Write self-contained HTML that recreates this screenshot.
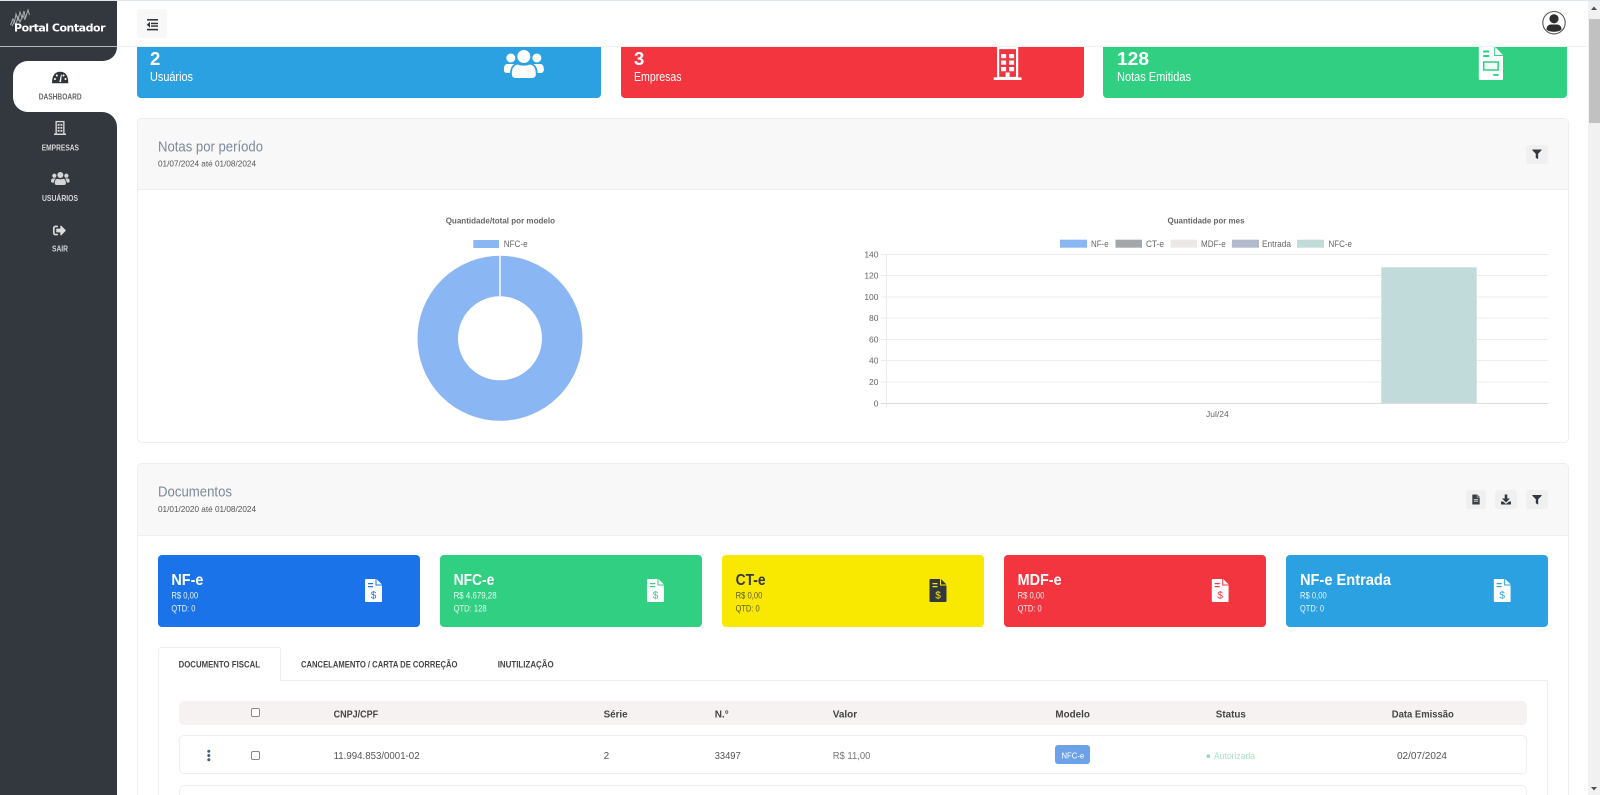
<!DOCTYPE html>
<html lang="pt-BR">
<head>
<meta charset="utf-8">
<title>Portal Contador</title>
<style>
html,body{margin:0;padding:0;width:1600px;height:795px;overflow:hidden;background:#fff;font-family:"Liberation Sans",Arial,sans-serif}
#page{position:relative;width:1600px;height:795px;overflow:hidden;background:#fff}
.b{position:absolute;box-sizing:border-box}
svg.o{position:absolute;left:0;top:0}
text{font-family:"Liberation Sans",Arial,sans-serif}
</style>
</head>
<body>
<div id="page">
<div class="b" style="left:137px;top:47px;width:464px;height:51px;background:#2ca1e2;border-radius:0 0 4px 4px"></div>
<div class="b" style="left:620.5px;top:47px;width:463.5px;height:51px;background:#f3353f;border-radius:0 0 4px 4px"></div>
<div class="b" style="left:1103px;top:47px;width:464px;height:51px;background:#30cf82;border-radius:0 0 4px 4px"></div>

<div class="b" style="left:137px;top:118px;width:1432px;height:325px;border:1px solid #eee;border-radius:5px;background:#fff"></div>
<div class="b" style="left:138px;top:119px;width:1430px;height:71px;background:#f8f8f8;border-bottom:1px solid #eee;border-radius:4px 4px 0 0"></div>
<div class="b" style="left:137px;top:463px;width:1432px;height:340px;border:1px solid #eee;border-radius:5px;background:#fff"></div>
<div class="b" style="left:138px;top:464px;width:1430px;height:72px;background:#f8f8f8;border-bottom:1px solid #eee;border-radius:4px 4px 0 0"></div>

<div class="b" style="left:1526px;top:145px;width:22px;height:19px;background:#f0f0f0;border-radius:3px"></div>
<div class="b" style="left:1466px;top:490px;width:20px;height:19px;background:#f0f0f0;border-radius:3px"></div>
<div class="b" style="left:1495px;top:490px;width:22px;height:19px;background:#f0f0f0;border-radius:3px"></div>
<div class="b" style="left:1526px;top:490px;width:22px;height:19px;background:#f0f0f0;border-radius:3px"></div>

<div class="b" style="left:157.5px;top:555px;width:262px;height:72px;background:#1a73e8;border-radius:4px"></div>
<div class="b" style="left:439.7px;top:555px;width:262px;height:72px;background:#30cf82;border-radius:4px"></div>
<div class="b" style="left:722px;top:555px;width:262px;height:72px;background:#f9e900;border-radius:4px"></div>
<div class="b" style="left:1004.2px;top:555px;width:262px;height:72px;background:#f3353f;border-radius:4px"></div>
<div class="b" style="left:1286.2px;top:555px;width:262px;height:72px;background:#2ca1e2;border-radius:4px"></div>

<div class="b" style="left:158px;top:680px;width:1390px;height:130px;border:1px solid #eee;background:#fff"></div>
<div class="b" style="left:158px;top:647px;width:123px;height:34px;border:1px solid #eee;border-bottom:0;background:#fff;border-radius:3px 3px 0 0"></div>
<div class="b" style="left:178.5px;top:701px;width:1348.5px;height:24px;background:#f6f2f1;border-radius:5px"></div>
<div class="b" style="left:178.5px;top:735px;width:1348.5px;height:39px;border:1px solid #eee;border-radius:5px;background:#fff"></div>
<div class="b" style="left:178.5px;top:785px;width:1348.5px;height:30px;border:1px solid #eee;border-radius:5px;background:#fff"></div>
<div class="b" style="left:251px;top:708px;width:9px;height:9px;border:1px solid #8a8a8a;border-radius:2px;background:#fff"></div>
<div class="b" style="left:251px;top:751px;width:9px;height:9px;border:1px solid #8a8a8a;border-radius:2px;background:#fff"></div>
<div class="b" style="left:1054.5px;top:745px;width:35.5px;height:19px;background:#6ea2e8;border-radius:3px"></div>

<div class="b" style="left:117px;top:0;width:1472px;height:47px;background:#fff;border-bottom:1px solid #f1f1f1"></div>
<div class="b" style="left:0;top:0;width:1600px;height:1px;background:#dfe7ec"></div>
<div class="b" style="left:137px;top:9px;width:30px;height:29px;background:#f8f8f8;border-radius:3px"></div>

<div class="b" style="left:0;top:1px;width:117px;height:794px;background:#33383e"></div>
<div class="b" style="left:0;top:46px;width:117px;height:1px;background:#b4b6b8"></div>
<div class="b" style="left:100px;top:47px;width:17px;height:80px;background:#fff"></div>
<div class="b" style="left:0;top:47px;width:117px;height:14px;background:#33383e;border-radius:0 0 15px 0"></div>
<div class="b" style="left:13px;top:61px;width:104px;height:51px;background:#fff;border-radius:15px 0 0 15px"></div>
<div class="b" style="left:0;top:112px;width:117px;height:683px;background:#33383e;border-radius:0 15px 0 0"></div>

<div class="b" style="left:1588px;top:1px;width:12px;height:794px;background:#f1f1f1"></div>
<div class="b" style="left:1589px;top:19px;width:11px;height:104px;background:#c1c1c1"></div>

<svg class="o" width="1600" height="795" viewBox="0 0 1600 795" xmlns="http://www.w3.org/2000/svg">
<defs>
<symbol id="bld" viewBox="0 0 28 33">
<path d="M4.500 1H23.500V31H4.500Z" fill="none" stroke="currentColor" stroke-width="2.200"/>
<rect x="0" y="30.400" width="28" height="2.600" fill="currentColor"/>
<path d="M7.500 7h5v4.200h-5zM15.500 7h5v4.200h-5zM7.500 13.500h5v4.200h-5zM15.500 13.500h5v4.200h-5zM7.500 20h5v4.200h-5zM15.500 20h5v4.200h-5zM12 25.500h4V31h-4z" fill="currentColor"/>
</symbol>
<symbol id="bls" viewBox="0 0 28 33">
<path d="M5 1.500H23V31H5Z" fill="none" stroke="currentColor" stroke-width="3.200"/>
<rect x="0" y="29.500" width="28" height="3.500" fill="currentColor"/>
<path d="M8.500 7h4.500v4.500H8.500zM15 7h4.500v4.500H15zM8.500 14h4.500v4.500H8.500zM15 14h4.500v4.500H15zM8.500 21h4.500v4.500H8.500zM15 21h4.500v4.500H15z" fill="currentColor"/>
</symbol>
<symbol id="usr" viewBox="0 0 40 28">
<circle cx="20" cy="6.500" r="6.500" fill="currentColor"/>
<circle cx="7" cy="8" r="4.500" fill="currentColor"/>
<circle cx="33" cy="8" r="4.500" fill="currentColor"/>
<path d="M8 24C8 17 11 15 14 14.500C16 16 24 16 26 14.500C29 15 32 17 32 24Q32 28 28 28H12Q8 28 8 24Z" fill="currentColor"/>
<path d="M0 19.500C0 15 2 14 4 14H10.500C8 15.500 6.500 18 6.200 23H3Q0 23 0 19.500ZM40 19.500C40 15 38 14 36 14H29.500C32 15.500 33.500 18 33.800 23H37Q40 23 40 19.500Z" fill="currentColor"/>
</symbol>
<symbol id="fil" viewBox="0 0 512 512">
<path d="M487.976 0H24.028C2.71 0-8.047 25.866 7.058 40.971L192 225.941V432c0 7.831 3.821 15.17 10.237 19.662l80 55.98C298.02 518.69 320 507.493 320 487.98V225.941l184.947-184.97C520.021 25.896 509.338 0 487.976 0z" fill="currentColor"/>
</symbol>
<symbol id="doc" viewBox="0 0 17 23">
<path d="M0 1Q0 0 1 0H10.500V6.500H17V22Q17 23 16 23H1Q0 23 0 22ZM11.500 0L17 5.500H11.500Z" fill="currentColor"/>
</symbol>
</defs>

<!-- logo -->
<g stroke="#a9adb0" stroke-width="1" fill="none">
<path d="M10.500 25L13 19L14.500 22L16 14L18 20L20 12L22 18L24 11L25.500 18L28 10L29.500 15"/>
<path d="M12 26L14 22L16 24L18 17L20 22L23 15L25 20"/>
</g>
<text x="14" y="31.700" font-size="11" font-weight="700" fill="#fff" textLength="91.500" lengthAdjust="spacing" style="font-family:'DejaVu Sans',sans-serif">Portal Contador</text>

<!-- sidebar icons -->
<path d="M52 83.300Q52 71.700 60.200 71.700Q68.300 71.700 68.300 83.300Z" fill="#2f343a"/>
<g fill="#fff"><circle cx="55" cy="79" r="1"/><circle cx="56.800" cy="75.500" r="1"/><circle cx="65.500" cy="79" r="1"/><circle cx="63.500" cy="75.500" r="1"/><path d="M59.300 82L61 74.500L61.800 74.700L61 82Z"/></g>
<use href="#bls" x="54" y="120.700" width="12" height="14.500" color="#d6d7d8"/>
<use href="#usr" x="51" y="172" width="18.700" height="13" color="#d4d5d6"/>
<svg x="52" y="224" width="15" height="13" viewBox="0 0 512 512"><path d="M497 273L329 441c-15 15-41 4.500-41-17v-96H152c-13.300 0-24-10.700-24-24v-96c0-13.300 10.700-24 24-24h136V88c0-21.400 25.900-32 41-17l168 168c9.300 9.400 9.300 24.600 0 34zM192 436v-40c0-6.600-5.400-12-12-12H96c-17.700 0-32-14.300-32-32V160c0-17.700 14.300-32 32-32h84c6.600 0 12-5.400 12-12V76c0-6.600-5.400-12-12-12H96c-53 0-96 43-96 96v192c0 53 43 96 96 96h84c6.600 0 12-5.400 12-12z" fill="#dcdcdd"/></svg>
<g font-size="8.500" font-weight="700">
<text x="38.700" y="99.300" fill="#666" textLength="43" lengthAdjust="spacingAndGlyphs">DASHBOARD</text>
<text x="41.700" y="150.300" fill="#d4d5d6" textLength="37.300" lengthAdjust="spacingAndGlyphs">EMPRESAS</text>
<text x="42" y="201" fill="#d4d5d6" textLength="36" lengthAdjust="spacingAndGlyphs">USUÁRIOS</text>
<text x="52" y="251.700" fill="#d4d5d6" textLength="16" lengthAdjust="spacingAndGlyphs">SAIR</text>
</g>

<!-- header icons -->
<g fill="#33383e">
<rect x="147" y="19" width="11" height="1.600"/>
<rect x="151" y="22.700" width="7" height="1.500"/>
<rect x="151" y="25.300" width="7" height="1.500"/>
<rect x="147" y="28.800" width="11" height="1.600"/>
<path d="M146.700 24.700L150 21.700V27.700Z"/>
</g>
<circle cx="1554" cy="22.700" r="11.200" fill="#fff" stroke="#555" stroke-width="1.100"/>
<circle cx="1554" cy="18.800" r="4.600" fill="#2e2e2e"/>
<path d="M1546.500 29.500C1546.500 25.500 1549.500 24.500 1551 24.500H1557C1558.500 24.500 1561.500 25.500 1561.500 29.500C1559 32.500 1549 32.500 1546.500 29.500Z" fill="#2e2e2e"/>

<!-- scrollbar arrows -->
<path d="M1594 6.500L1597 10H1591Z" fill="#505050"/>
<path d="M1594 790.500L1597 787H1591Z" fill="#505050"/>

<!-- stat cards -->
<g fill="#fff">
<text x="150" y="65" font-size="18.500" font-weight="700">2</text>
<text x="634" y="65" font-size="18.500" font-weight="700">3</text>
<text x="1117" y="65" font-size="18.500" font-weight="700" textLength="32" lengthAdjust="spacingAndGlyphs">128</text>
<text x="150" y="81" font-size="12.500" textLength="43" lengthAdjust="spacingAndGlyphs">Usuários</text>
<text x="634" y="81" font-size="12.500" textLength="47.500" lengthAdjust="spacingAndGlyphs">Empresas</text>
<text x="1117" y="81" font-size="12.500" textLength="74" lengthAdjust="spacingAndGlyphs">Notas Emitidas</text>
</g>
<use href="#usr" x="503.700" y="50" width="40.300" height="28" color="#fff"/>
<use href="#bld" x="993.600" y="47" width="28" height="33" color="#fff"/>
<svg x="1478.700" y="47" width="24.300" height="33" viewBox="0 0 24.300 33">
<path d="M0 0H15.500V9H24.300V32Q24.300 33 23.300 33H1Q0 33 0 32ZM16.500 0L24.300 8H16.500Z" fill="#fff"/>
<path d="M4.500 3.500H10.500V5.500H4.500ZM4.500 8H10.500V10H4.500Z" fill="#30cf82"/>
<rect x="5" y="15" width="14.500" height="8" fill="#f2fbf6" stroke="#30cf82" stroke-width="1.500"/>
<rect x="14.500" y="27" width="5.500" height="1.800" fill="#30cf82"/>
</svg>

<!-- panel heads -->
<text x="158" y="151.500" font-size="14.500" fill="#7d8a9c" textLength="105" lengthAdjust="spacingAndGlyphs">Notas por período</text>
<text x="158" y="166.700" font-size="8.500" fill="#555" textLength="98" lengthAdjust="spacingAndGlyphs">01/07/2024 até 01/08/2024</text>
<text x="158" y="496.500" font-size="14.500" fill="#7d8a9c" textLength="74" lengthAdjust="spacingAndGlyphs">Documentos</text>
<text x="158" y="512" font-size="8.500" fill="#555" textLength="98" lengthAdjust="spacingAndGlyphs">01/01/2020 até 01/08/2024</text>
<use href="#fil" x="1532.200" y="149.500" width="9.500" height="9.500" color="#33383e"/>
<use href="#fil" x="1532" y="495" width="10" height="9.500" color="#33383e"/>
<svg x="1472" y="494.500" width="8" height="10" viewBox="0 0 17 23">
<path d="M0 1Q0 0 1 0H10.500V6.500H17V22Q17 23 16 23H1Q0 23 0 22ZM11.500 0L17 5.500H11.500Z" fill="#3a3f45"/>
<path d="M3.500 10.500H13.500V12.500H3.500ZM3.500 14.500H13.500V16.500H3.500Z" fill="#eee"/>
</svg>
<g fill="#33383e"><path d="M1504.700 494.500H1507.300V498.500H1510L1506 502.500L1502 498.500H1504.700Z"/><path d="M1501 501.500H1503L1506 504L1509 501.500H1511V504.500H1501Z"/></g>

<!-- donut -->
<text x="445.700" y="223.500" font-size="8.500" font-weight="700" fill="#666" textLength="109.300" lengthAdjust="spacingAndGlyphs">Quantidade/total por modelo</text>
<rect x="473.300" y="240" width="25.700" height="8" fill="#8ab6f4"/>
<text x="503.700" y="247" font-size="9" fill="#666" textLength="24" lengthAdjust="spacingAndGlyphs">NFC-e</text>
<circle cx="500" cy="338.300" r="62.250" fill="none" stroke="#8ab6f4" stroke-width="40.500"/>
<rect x="499.300" y="255" width="1.400" height="42" fill="#fff"/>

<!-- bar chart -->
<text x="1167.500" y="223.500" font-size="8.500" font-weight="700" fill="#666" textLength="77" lengthAdjust="spacingAndGlyphs">Quantidade por mes</text>
<g font-size="9" fill="#666">
<rect x="1060" y="239.700" width="27" height="8" fill="#8ab6f4"/><text x="1091" y="247" textLength="17.600" lengthAdjust="spacingAndGlyphs">NF-e</text>
<rect x="1115.500" y="239.700" width="26.500" height="8" fill="#a3a7a9"/><text x="1146" y="247" textLength="18" lengthAdjust="spacingAndGlyphs">CT-e</text>
<rect x="1170.600" y="239.700" width="26.400" height="8" fill="#ece8e6"/><text x="1201" y="247" textLength="24.700" lengthAdjust="spacingAndGlyphs">MDF-e</text>
<rect x="1232" y="239.700" width="27" height="8" fill="#b2bacb"/><text x="1262" y="247" textLength="29" lengthAdjust="spacingAndGlyphs">Entrada</text>
<rect x="1297" y="239.700" width="27" height="8" fill="#c1dbd9"/><text x="1328.500" y="247" textLength="23.500" lengthAdjust="spacingAndGlyphs">NFC-e</text>
</g>
<g stroke="#ececec" stroke-width="1">
<path d="M881 254.500H1548.500M881 275.500H1548.500M881 297H1548.500M881 318H1548.500M881 339.500H1548.500M881 360.500H1548.500M881 382H1548.500"/>
<path d="M886.500 254V408"/>
</g>
<path d="M881 403.500H1548.500" stroke="#dcdcdc" stroke-width="1"/>
<rect x="1381" y="267" width="96" height="136" fill="#c1dbdb"/>
<path d="M1381.500 403V267.500H1476.500V403" fill="none" stroke="#d3e6e3" stroke-width="1"/>
<g font-size="8.500" fill="#666" text-anchor="end">
<text x="878.500" y="257.500">140</text><text x="878.500" y="278.500">120</text><text x="878.500" y="300">100</text><text x="878.500" y="321">80</text><text x="878.500" y="342.500">60</text><text x="878.500" y="363.500">40</text><text x="878.500" y="385">20</text><text x="878.500" y="406.500">0</text>
</g>
<text x="1217.400" y="417" font-size="8.500" fill="#666" text-anchor="middle">Jul/24</text>

<!-- doc cards -->
<g fill="#fff">
<text x="171.400" y="585" font-size="15.500" font-weight="700" textLength="32" lengthAdjust="spacingAndGlyphs">NF-e</text>
<text x="171.400" y="598.300" font-size="8.800" textLength="26.800" lengthAdjust="spacingAndGlyphs" opacity=".9">R$ 0,00</text>
<text x="171.400" y="611.700" font-size="8.800" textLength="24" lengthAdjust="spacingAndGlyphs" opacity=".9">QTD: 0</text>
<text x="453.600" y="585" font-size="15.500" font-weight="700" textLength="40.700" lengthAdjust="spacingAndGlyphs">NFC-e</text>
<text x="453.600" y="598.300" font-size="8.800" textLength="43" lengthAdjust="spacingAndGlyphs" opacity=".9">R$ 4.679,28</text>
<text x="453.600" y="611.700" font-size="8.800" textLength="33" lengthAdjust="spacingAndGlyphs" opacity=".9">QTD: 128</text>
<text x="1017.600" y="585" font-size="15.500" font-weight="700" textLength="44" lengthAdjust="spacingAndGlyphs">MDF-e</text>
<text x="1017.600" y="598.300" font-size="8.800" textLength="26.800" lengthAdjust="spacingAndGlyphs" opacity=".9">R$ 0,00</text>
<text x="1017.600" y="611.700" font-size="8.800" textLength="24" lengthAdjust="spacingAndGlyphs" opacity=".9">QTD: 0</text>
<text x="1300" y="585" font-size="15.500" font-weight="700" textLength="91" lengthAdjust="spacingAndGlyphs">NF-e Entrada</text>
<text x="1300" y="598.300" font-size="8.800" textLength="26.800" lengthAdjust="spacingAndGlyphs" opacity=".9">R$ 0,00</text>
<text x="1300" y="611.700" font-size="8.800" textLength="24" lengthAdjust="spacingAndGlyphs" opacity=".9">QTD: 0</text>
</g>
<g fill="#33383e">
<text x="735.600" y="585" font-size="15.500" font-weight="700" textLength="30" lengthAdjust="spacingAndGlyphs">CT-e</text>
<text x="735.600" y="598.300" font-size="8.800" textLength="26.800" lengthAdjust="spacingAndGlyphs" opacity=".8">R$ 0,00</text>
<text x="735.600" y="611.700" font-size="8.800" textLength="24" lengthAdjust="spacingAndGlyphs" opacity=".8">QTD: 0</text>
</g>

<!-- doc icons -->
<g font-size="10" font-weight="400" text-anchor="middle">
<use href="#doc" x="365" y="579" width="17" height="23" color="#fff"/>
<path d="M368 583H373V584.300H368ZM368 586H373V587.300H368Z" fill="#1a73e8"/>
<text x="373.500" y="598.500" fill="#1a73e8">$</text>
<use href="#doc" x="647" y="579" width="17" height="23" color="#fff"/>
<path d="M650 583H655V584.300H650ZM650 586H655V587.300H650Z" fill="#30cf82"/>
<text x="655.500" y="598.500" fill="#30cf82">$</text>
<use href="#doc" x="929.500" y="579" width="17" height="23" color="#33383e"/>
<path d="M932.500 583H937.500V584.300H932.500ZM932.500 586H937.500V587.300H932.500Z" fill="#f9e900"/>
<text x="938" y="598.500" fill="#f9e900">$</text>
<use href="#doc" x="1211.700" y="579" width="17" height="23" color="#fff"/>
<path d="M1214.700 583H1219.700V584.300H1214.700ZM1214.700 586H1219.700V587.300H1214.700Z" fill="#f3353f"/>
<text x="1220.200" y="598.500" fill="#f3353f">$</text>
<use href="#doc" x="1493.700" y="579" width="17" height="23" color="#fff"/>
<path d="M1496.700 583H1501.700V584.300H1496.700ZM1496.700 586H1501.700V587.300H1496.700Z" fill="#2ca1e2"/>
<text x="1502.200" y="598.500" fill="#2ca1e2">$</text>
</g>

<!-- tabs -->
<g font-size="9" font-weight="700" fill="#444">
<text x="178.600" y="667.500" textLength="81.400" lengthAdjust="spacingAndGlyphs">DOCUMENTO FISCAL</text>
<text x="301" y="667.500" textLength="156.500" lengthAdjust="spacingAndGlyphs">CANCELAMENTO / CARTA DE CORREÇÃO</text>
<text x="497.700" y="667.500" textLength="56" lengthAdjust="spacingAndGlyphs">INUTILIZAÇÃO</text>
</g>

<!-- table head -->
<g font-size="10" font-weight="700" fill="#444">
<text x="333.600" y="717.500" textLength="44.500" lengthAdjust="spacingAndGlyphs">CNPJ/CPF</text>
<text x="603.600" y="717.500" textLength="24" lengthAdjust="spacingAndGlyphs">Série</text>
<text x="714.700" y="717.500" textLength="14" lengthAdjust="spacingAndGlyphs">N.°</text>
<text x="832.700" y="717.500" textLength="24.500" lengthAdjust="spacingAndGlyphs">Valor</text>
<text x="1055.400" y="717.500" textLength="34.500" lengthAdjust="spacingAndGlyphs">Modelo</text>
<text x="1215.800" y="717.500" textLength="30" lengthAdjust="spacingAndGlyphs">Status</text>
<text x="1391.800" y="717.500" textLength="62" lengthAdjust="spacingAndGlyphs">Data Emissão</text>
</g>

<!-- row -->
<g fill="#3f5a80"><circle cx="208.800" cy="751.300" r="1.500"/><circle cx="208.800" cy="755.500" r="1.500"/><circle cx="208.800" cy="759.700" r="1.500"/></g>
<g font-size="10" fill="#555">
<text x="333.600" y="759" textLength="86" lengthAdjust="spacingAndGlyphs">11.994.853/0001-02</text>
<text x="603.600" y="759">2</text>
<text x="714.700" y="759" textLength="26" lengthAdjust="spacingAndGlyphs">33497</text>
<text x="832.700" y="759" textLength="37.700" lengthAdjust="spacingAndGlyphs" fill="#777">R$ 11,00</text>
<text x="1397" y="759" textLength="50" lengthAdjust="spacingAndGlyphs">02/07/2024</text>
</g>
<text x="1061.500" y="758.700" font-size="8.500" fill="#fff" textLength="22.600" lengthAdjust="spacingAndGlyphs">NFC-e</text>
<circle cx="1208.300" cy="756.200" r="1.800" fill="#8fdcb6"/>
<text x="1214" y="759" font-size="8.800" fill="#a4e3c3" textLength="41" lengthAdjust="spacingAndGlyphs">Autorizada</text>
</svg>
</div>
</body>
</html>
